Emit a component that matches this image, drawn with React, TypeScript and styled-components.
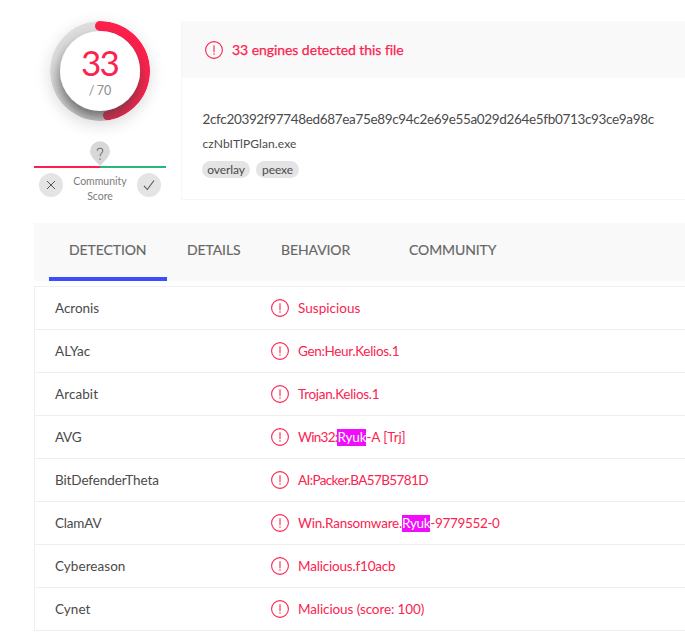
import React from 'react';
import styled, { createGlobalStyle } from 'styled-components';

const RED = '#fb2350';

const GlobalStyle = createGlobalStyle`
  * { box-sizing: border-box; }
  body {
    margin: 0;
    background: #fff;
    color: #4a4a4a;
    font: 14px/20px Lato, "Liberation Sans", sans-serif;
    overflow: hidden;
  }
`;

const Page = styled.div`
  width: 685px;
  height: 633px;
  overflow: hidden;
  padding-left: 34px;
`;

const Summary = styled.header`
  display: flex;
  gap: 15px;
  height: 223px;
  padding-top: 21px;
`;

const ScoreColumn = styled.div`
  width: 132px;
  flex: none;
`;

const Ring = styled.div`
  display: grid;
  width: 100px;
  height: 100px;
  margin: 0 auto;
  border-radius: 50%;
  box-shadow: 0 4px 16px rgba(0, 0, 0, 0.14);

  > * { grid-area: 1 / 1; }
`;

const ScoreText = styled.div`
  display: flex;
  flex-direction: column;
  align-items: center;
  z-index: 1;
  padding-top: 21px;
`;

const Positives = styled.div`
  font-size: 35px;
  line-height: 40px;
  letter-spacing: -1.8px;
  margin-right: 1px;
  color: ${RED};
`;

const Total = styled.div`
  margin-top: 1px;
  font-size: 12.5px;
  line-height: 16px;
  word-spacing: -1px;
  color: #8c8c8c;
`;

const Pin = styled.svg`
  display: block;
  margin: 20px auto 0;
`;

const ScoreBar = styled.div`
  height: 2px;
  background: linear-gradient(90deg, #ff1f4f 50%, #2bb57c 50%);
`;

const Votes = styled.div`
  display: flex;
  justify-content: space-between;
  padding: 5px 5px 0;
`;

const Vote = styled.div`
  display: grid;
  place-items: center;
  width: 24px;
  height: 24px;
  border-radius: 50%;
  background: #e4e4e4;
`;

const VoteLabel = styled.div`
  padding-top: 1px;
  font-size: 10.5px;
  line-height: 15px;
  text-align: center;
  color: #7c7c7c;
`;

const Card = styled.section`
  flex: 1;
  height: 179px;
  border: 1px solid #f6f6f6;
  border-right: 0;
`;

const CardHead = styled.div`
  display: flex;
  align-items: center;
  gap: 9px;
  height: 57px;
  padding: 1px 0 0 23px;
  margin-top: -1px;
  background: #f9f9f9;
  color: ${RED};
  letter-spacing: -0.06px;
  -webkit-text-stroke: 0.25px ${RED};
`;

const CardBody = styled.div`
  padding: 31px 0 0 20px;
`;

const Hash = styled.div`
  font-size: 13.5px;
  letter-spacing: -0.335px;
  margin-left: 0.5px;
`;

const FileName = styled.div`
  margin: 6px 0 8px 0.5px;
  font-size: 12px;
  line-height: 18px;
  letter-spacing: 0.1px;
`;

const Tags = styled.div`
  display: flex;
  gap: 6px;
`;

const Tag = styled.span<{ $width: number }>`
  width: ${p => p.$width}px;
  height: 17px;
  border-radius: 9px;
  background: #e4e4e4;
  font-size: 12px;
  line-height: 18px;
  letter-spacing: -0.1px;
  text-align: center;
`;

const Tabs = styled.nav`
  display: flex;
  height: 58px;
  padding-left: 15px;
  background: #f9f9f9;
`;

const Tab = styled.div<{ $width: number; $active?: boolean }>`
  width: ${p => p.$width}px;
  padding: 17px 0 0 20px;
  color: #666;
  letter-spacing: -0.1px;
  white-space: nowrap;
  -webkit-text-stroke: 0.15px #666;
  border-bottom: 4px solid ${p => (p.$active ? '#3b4efb' : 'transparent')};
`;

const Results = styled.div`
  margin-top: 5px;
  border: solid #efefef;
  border-width: 1px 0 0 1px;
  font-size: 13.5px;
`;

const Row = styled.div`
  display: flex;
  align-items: center;
  height: 43px;
  border-bottom: 1px solid #efefef;
`;

const Engine = styled.div`
  width: 236px;
  padding-left: 20px;
`;

const Verdict = styled.div`
  display: flex;
  align-items: center;
  gap: 9px;
  color: ${RED};
  white-space: pre;
`;

const Text = styled.span<{ $track?: number }>`
  letter-spacing: ${p => p.$track ?? 0}px;
`;

const Mark = styled(Text)`
  display: inline-block;
  height: 17px;
  line-height: 17px;
  background: #f00dfb;
  color: #fff;
`;

const AlertIcon = () => (
  <svg width="18" height="18" viewBox="0 0 18 18" fill="none" stroke={RED}>
    <circle cx="9" cy="9" r="8.4" strokeWidth="1.1" />
    <path d="M9 4.2v7M9 12.2v1.5" strokeWidth="1.1" />
  </svg>
);

type Part = [text: string, track: number, marked?: boolean];

const results: { engine: string; track: number; parts: Part[] }[] = [
  { engine: 'Acronis', track: -0.03, parts: [['Suspicious', 0.03]] },
  { engine: 'ALYac', track: 0.1, parts: [['Gen:Heur.Kelios.1', -0.32]] },
  { engine: 'Arcabit', track: 0.08, parts: [['Trojan.Kelios.1', -0.32]] },
  { engine: 'AVG', track: -0.3, parts: [['Win32:', -0.71], ['Ryuk', -0.15, true], ['-A [Trj]', -0.12]] },
  { engine: 'BitDefenderTheta', track: -0.11, parts: [['AI:Packer.BA57B5781D', -0.62]] },
  { engine: 'ClamAV', track: -0.2, parts: [['Win.Ransomware.', -0.22], ['Ryuk', -0.3, true], ['-9779552-0', -0.34]] },
  { engine: 'Cybereason', track: 0.05, parts: [['Malicious.f10acb', -0.19]] },
  { engine: 'Cynet', track: 0.05, parts: [['Malicious (score: 100)', -0.1]] },
];

const ScoreRing = () => (
  <svg width="100" height="100" viewBox="0 0 100 100">
    <defs>
      <filter id="discShadow" x="-30%" y="-30%" width="160%" height="170%">
        <feDropShadow dx="-1" dy="8" stdDeviation="7" floodColor="#444" floodOpacity="0.75" />
      </filter>
      <clipPath id="ringClip">
        <circle cx="50" cy="50" r="50" />
      </clipPath>
    </defs>
    <g clipPath="url(#ringClip)">
      <circle cx="50" cy="50" r="50" fill="#dedede" />
      <path d="M50 5A45 45 0 0 1 58 94.3" fill="none" stroke="#ff1f4b" strokeWidth="10" strokeLinecap="round" />
      <circle cx="50" cy="50" r="40" fill="#fff" filter="url(#discShadow)" />
    </g>
  </svg>
);

export default function App() {
  return (
    <Page>
      <GlobalStyle />
      <Summary>
        <ScoreColumn>
          <Ring>
            <ScoreRing />
            <ScoreText>
              <Positives>33</Positives>
              <Total>/ 70</Total>
            </ScoreText>
          </Ring>
          <Pin width="20" height="25" viewBox="0 0 20 25">
            <path d="M10 25L3.2 17.6A10 10 0 1 1 16.8 17.6Z" fill="#d8d8d8" />
            <path d="M7.2 9.8C7.2 6.4 12.8 6.4 12.8 9.8C12.8 12.2 10 12.2 10 15.2M10 17.2v1.7" fill="none" stroke="#777" strokeWidth="1.1" />
          </Pin>
          <ScoreBar />
          <Votes>
            <Vote>
              <svg width="10" height="10" viewBox="0 0 10 10" fill="none" stroke="#555" strokeWidth="1">
                <path d="M1 1l8 8M9 1L1 9" />
              </svg>
            </Vote>
            <VoteLabel>Community<br />Score</VoteLabel>
            <Vote>
              <svg width="12" height="12" viewBox="0 0 12 12" fill="none" stroke="#555" strokeWidth="1.1">
                <path d="M1 6.8l3.3 3.7L11 1.5" />
              </svg>
            </Vote>
          </Votes>
        </ScoreColumn>
        <Card>
          <CardHead>
            <AlertIcon />
            <span>33 engines detected this file</span>
          </CardHead>
          <CardBody>
            <Hash>2cfc20392f97748ed687ea75e89c94c2e69e55a029d264e5fb0713c93ce9a98c</Hash>
            <FileName>czNbITlPGlan.exe</FileName>
            <Tags>
              <Tag $width={48}>overlay</Tag>
              <Tag $width={43}>peexe</Tag>
            </Tags>
          </CardBody>
        </Card>
      </Summary>
      <Tabs>
        <Tab $width={118} $active>DETECTION</Tab>
        <Tab $width={94}>DETAILS</Tab>
        <Tab $width={128}>BEHAVIOR</Tab>
        <Tab $width={130}>COMMUNITY</Tab>
      </Tabs>
      <Results>
        {results.map(({ engine, track, parts }) => (
          <Row key={engine}>
            <Engine><Text $track={track}>{engine}</Text></Engine>
            <Verdict>
              <AlertIcon />
              <span>
                {parts.map(([text, t, marked]) =>
                  marked ? <Mark key={text} $track={t}>{text}</Mark> : <Text key={text} $track={t}>{text}</Text>
                )}
              </span>
            </Verdict>
          </Row>
        ))}
      </Results>
    </Page>
  );
}
